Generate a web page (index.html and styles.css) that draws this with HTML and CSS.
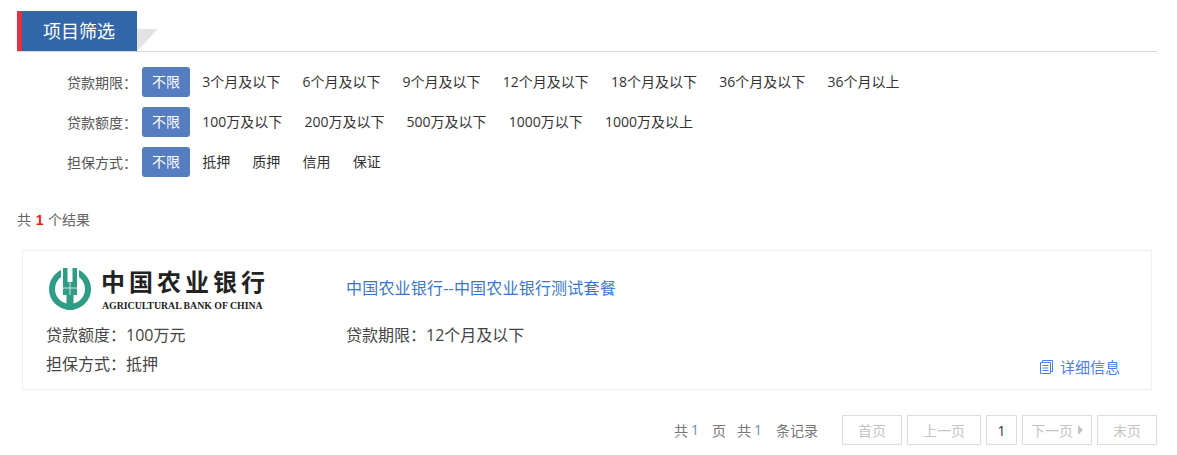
FILE: index.html
```html
<!DOCTYPE html>
<html>
  <head>
    <title>项目筛选</title>
    <link rel="stylesheet" href="styles.css">
  </head>

  <body>
    <div class="section-head">
      <h2 class="section-title">项目筛选</h2>
      <span class="section-corner"></span>
    </div>

    <div class="filters">
      <div class="filter-row">
        <span class="filter-label">贷款期限：</span>
        <a class="chip active">不限</a>
        <a class="chip">3个月及以下</a>
        <a class="chip">6个月及以下</a>
        <a class="chip">9个月及以下</a>
        <a class="chip">12个月及以下</a>
        <a class="chip">18个月及以下</a>
        <a class="chip">36个月及以下</a>
        <a class="chip">36个月以上</a>
      </div>
      <div class="filter-row">
        <span class="filter-label">贷款额度：</span>
        <a class="chip active">不限</a>
        <a class="chip">100万及以下</a>
        <a class="chip">200万及以下</a>
        <a class="chip">500万及以下</a>
        <a class="chip">1000万以下</a>
        <a class="chip">1000万及以上</a>
      </div>
      <div class="filter-row">
        <span class="filter-label">担保方式：</span>
        <a class="chip active">不限</a>
        <a class="chip">抵押</a>
        <a class="chip">质押</a>
        <a class="chip">信用</a>
        <a class="chip">保证</a>
      </div>
    </div>

    <div class="result-count">共 <b>1</b> 个结果</div>

    <div class="card">
      <div class="logo">
        <svg class="logo-mark" width="44" height="42" viewBox="0 0 44 42">
          <circle cx="22" cy="21" r="18" fill="none" stroke="#2f9c85" stroke-width="6"/>
          <rect x="13" y="0" width="18" height="10" fill="#fff"/>
          <path fill="#2f9c85" d="M15 0h4.500v14h5v-14h4.500v27h-3.500v15h-7v-15h-3.500z"/>
          <path fill="none" stroke="#cfe6e0" d="M15 20h14M22 14v13"/>
        </svg>
        <div class="logo-text">
          <div class="logo-cn">中国农业银行</div>
          <div class="logo-en">AGRICULTURAL BANK OF CHINA</div>
        </div>
      </div>
      <a class="card-title">中国农业银行--中国农业银行测试套餐</a>
      <div class="card-field">贷款额度：100万元</div>
      <div class="card-field">贷款期限：12个月及以下</div>
      <div class="card-field field-last">担保方式：抵押</div>
      <a class="detail-link">
        <svg width="14" height="14" viewBox="0 0 14 14">
          <path fill="none" stroke="#4a80f0" d="M2.500 2.500v-2h10v11h-2M.5 2.500h10v11h-10zM2.500 5.500h6M2.500 8h6M2.500 10.500h6"/>
        </svg>
        详细信息
      </a>
    </div>

    <div class="pager">
      <span class="pager-info">
        <span>共</span><i>1</i><span class="info-page">页</span><span class="info-total">共</span><i>1</i><span class="info-rec">条记录</span>
      </span>
      <a class="page-btn wide">首页</a>
      <a class="page-btn">上一页</a>
      <a class="page-btn current">1</a>
      <a class="page-btn next">下一页<span class="arrow"></span></a>
      <a class="page-btn wide">末页</a>
    </div>
  </body>
</html>
```

FILE: styles.css
```css
body {
  font-family: "Open Sans", "Noto Sans CJK SC", sans-serif;
  width: 1140px;
  margin: 0;
  padding: 11px 20px 0 17px;
  background: #fff;
  color: #333;
  font-size: 14px;
}

.section-head {
  display: flex;
  height: 40px;
  border-bottom: 1px solid #d9d9d9;
}

.section-title {
  margin: 0;
  width: 94px;
  height: 40px;
  line-height: 40px;
  padding-left: 21px;
  border-left: 5px solid #e0353f;
  background: #3366a8;
  color: #fff;
  font-size: 18px;
  font-weight: normal;
}

.section-corner {
  width: 0;
  height: 0;
  margin-top: 18px;
  border-top: 22px solid #e3e3e3;
  border-right: 21px solid transparent;
}

.filters {
  margin-top: 15px;
}

.filter-row {
  display: flex;
  align-items: center;
  gap: 2.200px;
  height: 30px;
  margin-bottom: 10px;
}

.filter-label {
  width: 120px;
  margin-right: 2.800px;
  text-align: right;
  color: #555;
  white-space: nowrap;
}

.chip {
  padding: 0 10px;
  line-height: 30px;
  color: #333;
  white-space: nowrap;
  border-radius: 3px;
}

.chip.active {
  background: #557dc0;
  color: #fff;
}

.result-count {
  margin-top: 33px;
  line-height: 20px;
  color: #666;
}

.result-count b {
  color: #e8200c;
  font-family: "Liberation Sans", sans-serif;
  margin: 0 1px;
}

.card {
  display: grid;
  grid-template-columns: 300px 1fr;
  grid-template-rows: 60px 30px 29px;
  align-items: center;
  width: 1074px;
  height: 122px;
  margin: 20px 0 0 5px;
  padding: 8px 31px 8px 23px;
  border: 1px solid #eee;
  font-size: 16px;
}

.logo {
  display: flex;
  align-items: center;
  gap: 9px;
  margin-left: 2px;
}

.logo-cn {
  font-family: "Noto Sans CJK SC", sans-serif;
  font-size: 24px;
  font-weight: 700;
  line-height: 28px;
  letter-spacing: 4px;
  color: #222;
  white-space: nowrap;
}

.logo-en {
  margin: 5px 0 0 1px;
  font-family: "Liberation Serif", serif;
  font-size: 9.800px;
  font-weight: 700;
  line-height: 12px;
  color: #222;
  white-space: nowrap;
}

.card-title {
  margin-bottom: 4px;
  letter-spacing: 0.200px;
  color: #3a77c9;
}

.card-field {
  color: #444;
}

.field-last {
  margin-bottom: 2px;
}

.detail-link {
  display: flex;
  align-items: center;
  justify-content: flex-end;
  gap: 6px;
  align-self: end;
  margin-bottom: 1px;
  font-size: 15px;
  color: #4a80f0;
}

.pager {
  display: flex;
  justify-content: flex-end;
  align-items: center;
  gap: 5px;
  margin-top: 25px;
}

.pager-info {
  display: flex;
  margin-right: 19px;
  color: #777;
  white-space: nowrap;
}

.pager-info i {
  margin-left: 3px;
  font-style: normal;
  color: #6c8db5;
}

.info-page {
  margin-left: 13px;
}

.info-total {
  margin-left: 11px;
}

.info-rec {
  margin-left: 14px;
}

.page-btn {
  display: flex;
  align-items: center;
  justify-content: center;
  height: 28px;
  padding: 0 15px;
  border: 1px solid #ddd;
  color: #c4c4c4;
  white-space: nowrap;
}

.page-btn.wide {
  width: 28px;
}

.page-btn.current {
  width: 29px;
  padding: 0;
  color: #333;
}

.page-btn.next {
  padding: 0 8px;
}

.arrow {
  width: 0;
  height: 0;
  margin-left: 5px;
  border-left: 5px solid #c4c4c4;
  border-top: 5px solid transparent;
  border-bottom: 5px solid transparent;
}
```
